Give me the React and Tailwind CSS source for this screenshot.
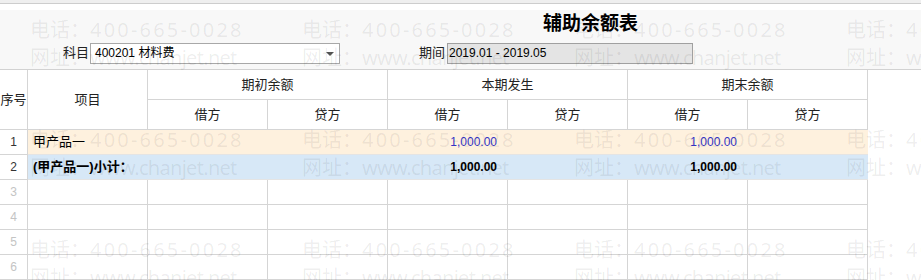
import React from 'react';

const cols = ['期初余额', '本期发生', '期末余额'];

const rows = [
  { no: 1, name: '甲产品一', qcj: '', qcd: '', bqj: '1,000.00', bqd: '', qmj: '1,000.00', qmd: '', tone: 'bg-[#fef1de] text-[#3434c4]' },
  { no: 2, name: '(甲产品一)小计：', qcj: '', qcd: '', bqj: '1,000.00', bqd: '', qmj: '1,000.00', qmd: '', tone: 'bg-[#d7e8f7] text-black font-bold' },
  { no: 3 },
  { no: 4 },
  { no: 5 },
  { no: 6 },
];

const Watermark = () => {
  const xs = [30, 302, 574, 846];
  const ys = [20, 130, 240];
  return (
    <div className="absolute inset-0 pointer-events-none overflow-hidden">
      {ys.map((y) =>
        xs.map((x) => (
          <div
            key={`${x}-${y}`}
            className="absolute whitespace-nowrap text-[20px] leading-[20px] text-[rgba(0,0,0,0.075)] font-['Noto_Sans','Noto_Sans_CJK_SC',sans-serif]"
            style={{ left: x, top: y }}
          >
            <div>电话：<span className="tracking-[2.2px]">400-665-0028</span></div>
            <div className="mt-[8px]">网址：<span className="tracking-[-0.7px]">www.chanjet.net</span></div>
          </div>
        ))
      )}
    </div>
  );
};

const Cell = ({ children, className = '' }) => (
  <div className={`border-r border-b border-[#d5d5d5] flex items-center ${className}`}>{children}</div>
);

export default function App() {
  return (
    <div className="relative w-[921px] h-[280px] overflow-hidden bg-white text-[12px] text-[#222] font-['Liberation_Sans','Noto_Sans_CJK_SC',sans-serif]">
      {/* top strip */}
      <div className="h-[3px] bg-[#efefef]" />
      <div className="h-px bg-[#cdcdcd]" />
      <div className="h-[6px] bg-white" />

      {/* toolbar */}
      <div className="h-[60px] bg-[#f8f8f8] border-b border-[#d2d2d2]">
        <div className="h-[28px] pl-[543px] pt-[2px] text-[19px] leading-[24px] font-bold text-black">辅助余额表</div>
        <div className="flex items-center h-[22px] mt-[4px]">
          <span className="ml-[63px] w-[27px] text-[13px]">科目</span>
          <div className="relative w-[250px] h-[21px] bg-white border border-[#a8a8a8] flex items-center pl-[4px] text-[12px] text-black">
            400201 材料费
            <span className="absolute right-[5px] top-[8px] w-0 h-0 border-l-[4px] border-r-[4px] border-t-[4px] border-l-transparent border-r-transparent border-t-[#555]" />
          </div>
          <span className="ml-[79px] w-[28px] text-[13px]">期间</span>
          <div className="w-[246px] h-[21px] bg-[#e4e4e4] border border-[#a0a0a0] flex items-center pl-[1px] text-[12px] text-black">
            2019.01 - 2019.05
          </div>
        </div>
      </div>

      {/* table */}
      <div className="w-[868px] grid grid-cols-[28px_120px_repeat(6,120px)] grid-rows-[30px_30px]">
        <Cell className="row-span-2 justify-center text-[13px]">序号</Cell>
        <Cell className="row-span-2 justify-center text-[13px]">项目</Cell>
        {cols.map((c) => (
          <Cell key={c} className="col-span-2 justify-center text-[13px]">{c}</Cell>
        ))}
        {cols.map((c) => (
          <React.Fragment key={c + 'sub'}>
            <Cell className="justify-center text-[13px]">借方</Cell>
            <Cell className="justify-center text-[13px]">贷方</Cell>
          </React.Fragment>
        ))}
      </div>
      <div className="w-[868px]">
        {rows.map((r) =>
          r.tone ? (
            <div key={r.no} className="flex h-[25px]">
              <div className="w-[28px] border-r border-b border-[#d5d5d5] flex items-center justify-center text-[#333]">{r.no}</div>
              <div className={`flex-1 grid grid-cols-[120px_repeat(6,120px)] border-b border-[#e4e4e4] ${r.tone}`}>
                <div className="flex items-center pl-[5px] text-black text-[13px]">{r.name}</div>
                {[r.qcj, r.qcd, r.bqj, r.bqd, r.qmj, r.qmd].map((v, i) => (
                  <div key={i} className="flex items-center justify-end pr-[11px]">{v}</div>
                ))}
              </div>
            </div>
          ) : (
            <div key={r.no} className="grid grid-cols-[28px_120px_repeat(6,120px)] h-[25px]">
              <Cell className="justify-center text-[#c4c4c4]">{r.no}</Cell>
              {[0, 1, 2, 3, 4, 5, 6].map((i) => (
                <Cell key={i} />
              ))}
            </div>
          )
        )}
      </div>

      <Watermark />
    </div>
  );
}
